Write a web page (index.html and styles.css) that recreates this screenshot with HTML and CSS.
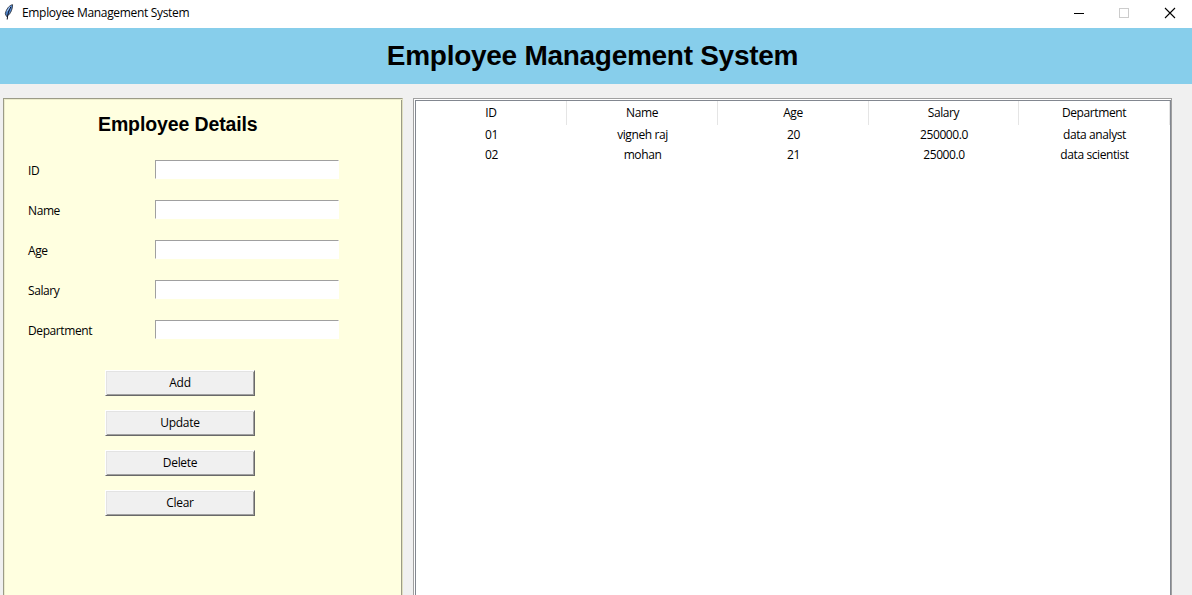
FILE: index.html
```html
<!DOCTYPE html>
<html lang="en">
<head>
<meta charset="utf-8">
<title>Employee Management System</title>
<link rel="stylesheet" href="styles.css">
</head>
<body>
<div class="titlebar">
  <svg class="feather" width="10" height="16" viewBox="0 0 10 16">
    <path d="M8.600.700C5.600 1 2.200 5 1.300 9.800l1.200 2.600C5.600 11 8.300 7 8.600.700z" fill="#4f86d0" stroke="#30343c" stroke-width="0.900"/>
    <path d="M6.800 3C5 6 3.600 9.500 3.200 15.500" fill="none" stroke="#0c1020" stroke-width="1"/>
    <path d="M6 2.600L3 7.400" stroke="#a9c8f5" stroke-width="1"/>
  </svg>
  <span class="caption">Employee Management System</span>
  <svg class="controls" width="112" height="12" viewBox="0 0 112 12" shape-rendering="crispEdges">
    <path d="M4 6.500h10" stroke="#000"/>
    <rect x="49.500" y="1.500" width="9" height="9" fill="none" stroke="#ccc"/>
    <path d="M95 1l10 10M105 1l-10 10" stroke="#000" stroke-width="1.100" shape-rendering="auto"/>
  </svg>
</div>
<h1 class="banner">Employee Management System</h1>
<main class="content">
  <section class="details">
    <h2 class="heading">Employee Details</h2>
    <div class="fields">
      <label class="field"><span class="label">ID</span><input class="entry" type="text"></label>
      <label class="field"><span class="label">Name</span><input class="entry" type="text"></label>
      <label class="field"><span class="label">Age</span><input class="entry" type="text"></label>
      <label class="field"><span class="label">Salary</span><input class="entry" type="text"></label>
      <label class="field"><span class="label">Department</span><input class="entry" type="text"></label>
    </div>
    <div class="actions">
      <button class="button">Add</button>
      <button class="button">Update</button>
      <button class="button">Delete</button>
      <button class="button">Clear</button>
    </div>
  </section>
  <section class="records">
    <div class="tree">
      <div class="row head"><span>ID</span><span>Name</span><span>Age</span><span>Salary</span><span>Department</span></div>
      <div class="row"><span>01</span><span>vigneh raj</span><span>20</span><span>250000.0</span><span>data analyst</span></div>
      <div class="row"><span>02</span><span>mohan</span><span>21</span><span>25000.0</span><span>data scientist</span></div>
    </div>
  </section>
</main>
</body>
</html>
```
FILE: styles.css
```css
* { box-sizing: border-box; }
body {
  margin: 0;
  height: 595px;
  overflow: hidden;
  display: flex;
  flex-direction: column;
  background: #f0f0f0;
  color: #000;
  font: 12px "Open Sans", "Noto Sans", sans-serif;
  letter-spacing: -0.4px;
}
.titlebar {
  flex: none;
  height: 28px;
  display: flex;
  align-items: center;
  padding: 0 10px 2px 4px;
  background: #fff;
}
.feather { margin-top: -2px; }
.caption { margin: -1px 0 0 8px; flex: 1; letter-spacing: -0.33px; }
.banner {
  flex: none;
  margin: 0;
  height: 56px;
  padding-right: 7px;
  background: #87ceeb;
  font: bold 28px/56px "Liberation Sans", Arial, sans-serif;
  letter-spacing: -0.28px;
  text-align: center;
}
.content {
  flex: 1;
  min-height: 0;
  display: flex;
  gap: 10px;
  padding: 14px 20px 0 3px;
}
.details {
  width: 400px;
  border: 1px solid #9b9b87;
  border-right-color: #e0e0c0;
  border-bottom: 0;
  box-shadow: inset 1px 1px #ececcb, inset -1px 0 #9b9b87;
  background: #ffffe0;
}
.heading {
  margin: 0 0 0 94px;
  padding-top: 14px;
  height: 61px;
  font: bold 19.5px/23px "Liberation Sans", Arial, sans-serif;
  letter-spacing: -0.12px;
}
.fields { display: grid; gap: 21px; padding-left: 24px; }
.field { display: flex; height: 19px; }
.label { width: 127px; line-height: 22px; }
.entry {
  width: 184px;
  height: 19px;
  padding: 0 2px;
  border: 1px solid #fff;
  border-top-color: #a0a0a0;
  border-left-color: #a0a0a0;
  border-radius: 0;
  background: #fff;
  outline: 0;
}
.actions { display: grid; gap: 14px; padding: 31px 0 0 101px; }
.button {
  width: 150px;
  height: 26px;
  padding: 0;
  border: 1px solid #fff;
  border-right-color: #696969;
  border-bottom-color: #696969;
  box-shadow: inset 1px 1px #e3e3e3, inset -1px -1px #a0a0a0;
  background: #f0f0f0;
  color: #000;
  font: inherit;
  letter-spacing: -0.3px;
  line-height: 22px;
}
.records {
  width: 759px;
  border: 1px solid #a0a0a0;
  border-bottom: 0;
  padding: 1px 0 0 1px;
  background: #fff;
}
.tree {
  height: 100%;
  border: 1px solid #828790;
  border-bottom: 0;
}
.row {
  display: grid;
  grid-template-columns: 151px 151px 151px 150px 151px;
  line-height: 20px;
  text-align: center;
}
.head { height: 24px; line-height: 24px; }
.head span { border-right: 1px solid #e5e5e5; }
```
